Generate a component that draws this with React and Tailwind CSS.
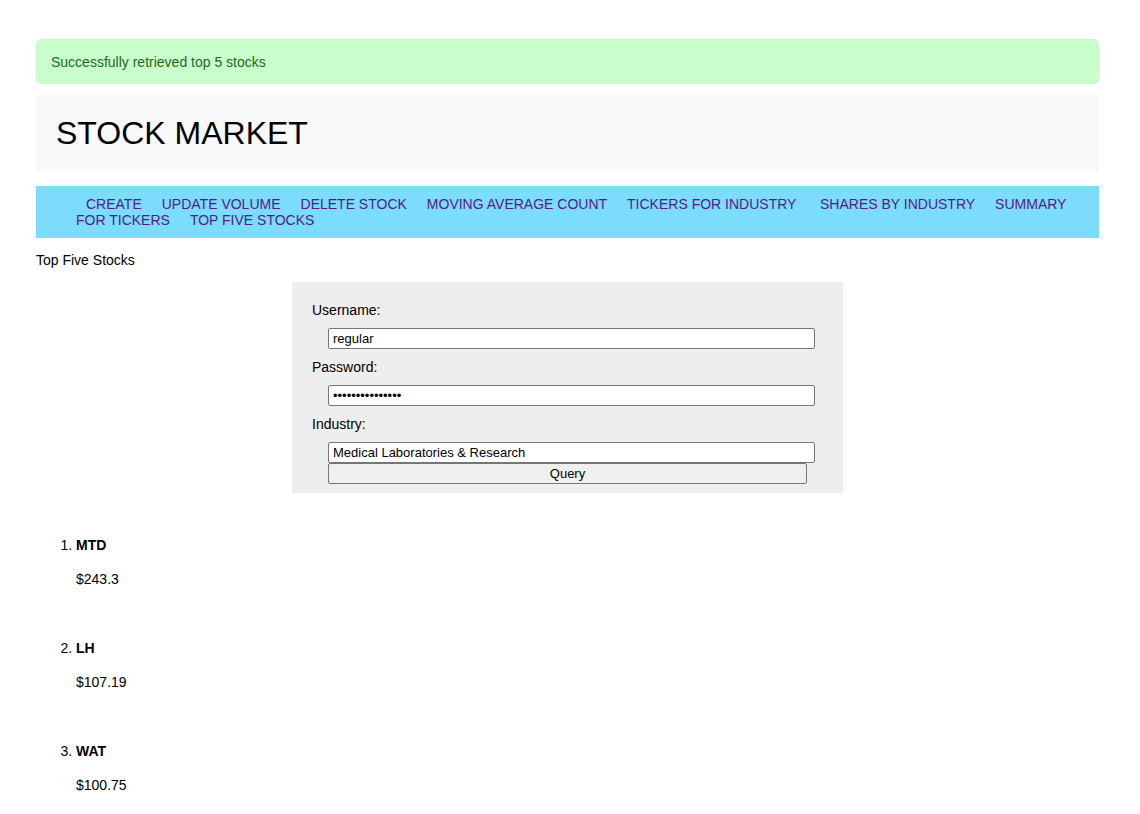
import { useState } from 'react';

const navLinks = [
  'CREATE',
  'UPDATE VOLUME',
  'DELETE STOCK',
  'MOVING AVERAGE COUNT',
  'TICKERS FOR INDUSTRY ',
  'SHARES BY INDUSTRY',
  'SUMMARY FOR TICKERS',
  'TOP FIVE STOCKS',
];

const stocks = [
  { ticker: 'MTD', price: '$243.3' },
  { ticker: 'LH', price: '$107.19' },
  { ticker: 'WAT', price: '$100.75' },
];

export default function App() {
  const [username, setUsername] = useState('regular');
  const [password, setPassword] = useState('regularpassword');
  const [industry, setIndustry] = useState('Medical Laboratories & Research');

  return (
    <div className="min-h-[814px] bg-white pt-[39px] font-['Liberation_Sans',Arial,sans-serif] text-[14px] leading-[16px] text-black">
      <div className="ml-[36px] w-[1063px]">
        {/* Alert */}
        <div className="flex h-[45px] items-center rounded-[5px] bg-[#c9fdcb] px-[15px] text-[#1b6b1f]">
          Successfully retrieved top 5 stocks
        </div>

        {/* Header */}
        <div className="mt-[11px] flex h-[76px] items-center bg-[#f9f9f9] px-[20px]">
          <h1 className="text-[32px] leading-[37px]">STOCK MARKET</h1>
        </div>

        {/* Nav */}
        <nav className="mt-[15px] bg-[#7bdcfb] py-[10px] pl-[40px] pr-[30px] leading-[16px]">
          {navLinks.map((l) => (
            <a key={l} href="#" className="mx-[10px] whitespace-pre-wrap text-[#551a8b]">
              {l}
            </a>
          ))}
        </nav>

        <p className="mt-[14px]">Top Five Stocks</p>

        {/* Form */}
        <div className="mx-auto mt-[14px] w-[551px] bg-[#eeeeee] px-[20px] pb-[9px] pt-[20px]">
          <label className="block">Username:</label>
          <input
            value={username}
            onChange={(e) => setUsername(e.target.value)}
            className="ml-[16px] mt-[10px] block h-[21px] w-[487px] rounded-[2px] border border-[#767676] bg-white px-[4px] text-[13px] outline-none"
          />
          <label className="mt-[10px] block">Password:</label>
          <input
            type="password"
            value={password}
            onChange={(e) => setPassword(e.target.value)}
            className="ml-[16px] mt-[10px] block h-[21px] w-[487px] rounded-[2px] border border-[#767676] bg-white px-[4px] text-[13px] outline-none"
          />
          <label className="mt-[10px] block">Industry:</label>
          <input
            value={industry}
            onChange={(e) => setIndustry(e.target.value)}
            className="ml-[16px] mt-[10px] block h-[21px] w-[487px] rounded-[2px] border border-[#767676] bg-white px-[4px] text-[13px] outline-none"
          />
          <button className="ml-[16px] block h-[21px] w-[479px] rounded-[2px] border border-[#767676] bg-[#efefef] text-center text-[13px]">
            Query
          </button>
        </div>

        {/* Results */}
        <ol className="mt-[44px] list-decimal pl-[40px]">
          {stocks.map((s) => (
            <li key={s.ticker} className="mb-[53px]">
              <span className="font-bold">{s.ticker}</span>
              <p className="mt-[18px]">{s.price}</p>
            </li>
          ))}
        </ol>
      </div>
    </div>
  );
}
